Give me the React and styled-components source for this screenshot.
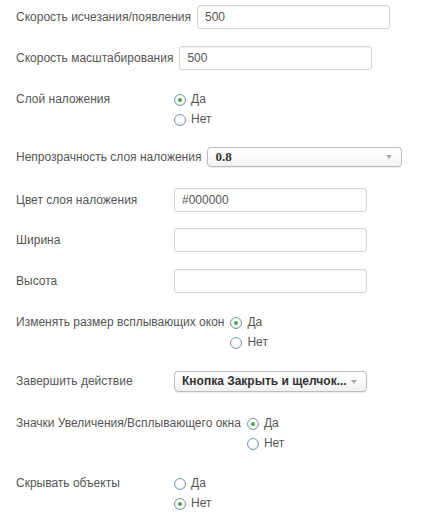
import React from "react";
import styled, { createGlobalStyle } from "styled-components";

const GlobalStyle = createGlobalStyle`
  html, body {
    margin: 0;
    padding: 0;
    background: #fff;
  }
  body {
    font-family: "Liberation Sans", Arial, sans-serif;
    font-size: 12px;
    color: #555;
  }
`;

const Form = styled.div`
  padding: 5px 0 0 16px;
  width: 424px;
  box-sizing: border-box;
`;

const Row = styled.div`
  display: flex;
  align-items: flex-start;
  margin-top: ${(p) => p.$top || 0}px;
`;

const Label = styled.div`
  min-width: 158px;
  padding-right: 6px;
  box-sizing: border-box;
  white-space: nowrap;
  line-height: ${(p) => p.$h || 24}px;
  flex-shrink: 0;
`;

const TextInput = styled.div`
  width: ${(p) => p.$w || 193}px;
  height: 24px;
  box-sizing: border-box;
  border: 1px solid #d4d4d4;
  border-radius: 3px;
  box-shadow: inset 0 1px 1px rgba(0, 0, 0, 0.05);
  padding-left: 7px;
  line-height: 22px;
  color: #555;
  background: #fff;
`;

const Select = styled.div`
  position: relative;
  width: ${(p) => p.$w || 193}px;
  height: ${(p) => p.$h || 21}px;
  box-sizing: border-box;
  border: 1px solid #bdbdbd;
  border-radius: 4px;
  background: linear-gradient(#ffffff 20%, #f0f0f0 100%);
  box-shadow: 0 1px 1px rgba(0, 0, 0, 0.08);
  padding-left: 7px;
  line-height: ${(p) => (p.$h || 21) - 2}px;
  font-weight: bold;
  color: #333;
  font-family: ${(p) =>
    p.$serif ? '"Liberation Serif", "Times New Roman", serif' : "inherit"};
  font-size: ${(p) => (p.$serif ? 13 : 12)}px;
  white-space: nowrap;
  overflow: hidden;
`;

const Arrow = styled.span`
  position: absolute;
  right: 9px;
  top: 50%;
  margin-top: -2px;
  width: 0;
  height: 0;
  border-left: 3px solid transparent;
  border-right: 3px solid transparent;
  border-top: 4px solid #aaa;
`;

const RadioGroup = styled.div`
  display: flex;
  flex-direction: column;
`;

const Option = styled.div`
  display: flex;
  align-items: center;
  height: 20px;
`;

const Circle = styled.span`
  width: 12px;
  height: 12px;
  border-radius: 50%;
  box-sizing: border-box;
  border: 1px solid #7f93aa;
  background: radial-gradient(circle at 50% 35%, #ffffff 30%, #e4e8ed 100%);
  margin: 1px 5px 0 0;
  display: flex;
  align-items: center;
  justify-content: center;

  &::after {
    content: "";
    width: 4px;
    height: 4px;
    border-radius: 50%;
    background: ${(p) => (p.$on ? "#3fae3f" : "transparent")};
  }
`;

const Radios = ({ value }) => (
  <RadioGroup>
    <Option>
      <Circle $on={value === "yes"} />
      Да
    </Option>
    <Option>
      <Circle $on={value === "no"} />
      Нет
    </Option>
  </RadioGroup>
);

export default function App() {
  return (
    <>
      <GlobalStyle />
      <Form>
        <Row>
          <Label>Скорость исчезания/появления</Label>
          <TextInput>500</TextInput>
        </Row>
        <Row $top={17}>
          <Label>Скорость масштабирования</Label>
          <TextInput>500</TextInput>
        </Row>
        <Row $top={19}>
          <Label $h={20}>Слой наложения</Label>
          <Radios value="yes" />
        </Row>
        <Row $top={18}>
          <Label $h={20}>Непрозрачность слоя наложения</Label>
          <Select $w={195} $h={20} $serif>
            0.8
            <Arrow />
          </Select>
        </Row>
        <Row $top={21}>
          <Label>Цвет слоя наложения</Label>
          <TextInput>#000000</TextInput>
        </Row>
        <Row $top={16}>
          <Label>Ширина</Label>
          <TextInput />
        </Row>
        <Row $top={17}>
          <Label>Высота</Label>
          <TextInput />
        </Row>
        <Row $top={19}>
          <Label $h={20}>Изменять размер всплывающих окон</Label>
          <Radios value="yes" />
        </Row>
        <Row $top={19}>
          <Label $h={21}>Завершить действие</Label>
          <Select>
            Кнопка Закрыть и щелчок...
            <Arrow />
          </Select>
        </Row>
        <Row $top={21}>
          <Label $h={20}>Значки Увеличения/Всплывающего окна</Label>
          <Radios value="yes" />
        </Row>
        <Row $top={20}>
          <Label $h={20}>Скрывать объекты</Label>
          <Radios value="no" />
        </Row>
      </Form>
    </>
  );
}
